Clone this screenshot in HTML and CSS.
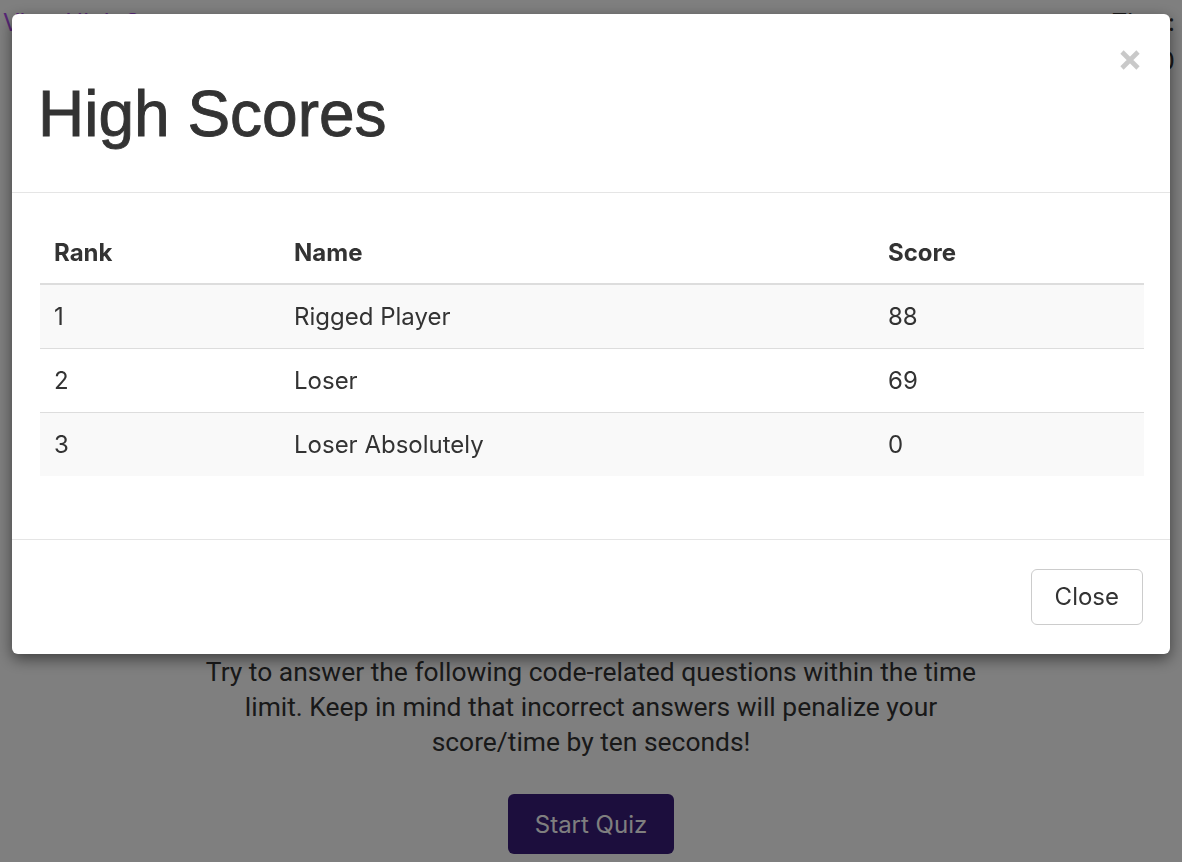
FILE: index.html
```html
<!DOCTYPE html>
<html lang="en">
<head>
<meta charset="utf-8">
<title>Coding Quiz</title>
<link rel="stylesheet" href="styles.css">
</head>
<body>
<header class="topbar">
  <a class="hs-link" href="#">View High Scores</a>
  <div class="timer">
    <div class="timer-label">Time:</div>
    <div class="timer-value">0</div>
  </div>
</header>
<main class="intro">
  <p class="intro-text">Try to answer the following code-related questions within the time limit. Keep in mind that incorrect answers will penalize your score/time by ten seconds!</p>
  <button class="start-btn" type="button">Start Quiz</button>
</main>

<div class="backdrop"></div>
<div class="modal">
  <div class="modal-dialog">
    <div class="modal-header">
      <h1 class="modal-title">High Scores</h1>
      <button class="close-x" type="button" aria-label="Close">
        <svg width="20" height="20" viewBox="0 0 20 20"><path d="M2 2 L18 18 M18 2 L2 18" stroke="#c9c9c9" stroke-width="4.6" fill="none"/></svg>
      </button>
    </div>
    <div class="modal-body">
      <table class="scores">
        <thead>
          <tr><th class="c-rank">Rank</th><th class="c-name">Name</th><th class="c-score">Score</th></tr>
        </thead>
        <tbody>
          <tr><td>1</td><td>Rigged Player</td><td>88</td></tr>
          <tr><td>2</td><td>Loser</td><td>69</td></tr>
          <tr><td>3</td><td>Loser Absolutely</td><td>0</td></tr>
        </tbody>
      </table>
    </div>
    <div class="modal-footer">
      <button class="btn-close" type="button">Close</button>
    </div>
  </div>
</div>
</body>
</html>
```

FILE: styles.css
```css
html, body {
  margin: 0;
  padding: 0;
}

body {
  background: #ffffff;
  color: #333333;
  font-family: Inter, "Liberation Sans", Arial, sans-serif;
  height: 862px;
  overflow: hidden;
}

.topbar {
  display: flex;
  justify-content: space-between;
  align-items: flex-start;
  padding: 5px 7px 0 3px;
}

.hs-link {
  color: #b050ee;
  text-decoration: none;
  font-size: 24px;
  line-height: 36px;
}

.timer {
  text-align: right;
  font-size: 24px;
  line-height: 36px;
  color: #333333;
}

.timer-value {
  font-size: 26px;
  line-height: 40px;
}

.intro {
  display: flex;
  flex-direction: column;
  align-items: center;
  padding-top: 574px;
}

.intro-text {
  width: 790px;
  margin: 0 0 34px;
  text-align: center;
  font-family: Roboto, "Liberation Sans", sans-serif;
  font-size: 26.4px;
  line-height: 35px;
  color: #333333;
}

.start-btn {
  width: 166px;
  height: 60px;
  border: none;
  border-radius: 6px;
  background: #381c7a;
  color: #ffffff;
  font-family: Inter, "Liberation Sans", sans-serif;
  font-size: 24px;
}

.backdrop {
  position: fixed;
  inset: 0;
  background: rgba(0, 0, 0, 0.5);
}

.modal {
  position: fixed;
  inset: 0;
  padding: 14px 12px;
}

.modal-dialog {
  width: 1158px;
  background: #ffffff;
  border-radius: 6px;
  box-shadow: 0 5px 15px rgba(0, 0, 0, 0.5);
}

.modal-header {
  display: flex;
  justify-content: space-between;
  align-items: flex-start;
  padding: 36px 30px 43px 26px;
  border-bottom: 1px solid #e5e5e5;
}

.modal-title {
  margin: 29px 0 0;
  font-family: "Liberation Sans", Arial, sans-serif;
  font-size: 64px;
  line-height: 70px;
  font-weight: 400;
  color: #333333;
  -webkit-text-stroke: 0.9px #333333;
}

.close-x {
  border: none;
  background: none;
  padding: 0;
  width: 20px;
  height: 20px;
  display: block;
}

.close-x svg {
  display: block;
}

.modal-body {
  padding: 28px 26px 28px 28px;
}

.scores {
  width: 100%;
  border-collapse: collapse;
  margin-bottom: 35px;
  font-size: 24px;
  color: #333333;
}

.scores th {
  text-align: left;
  font-weight: 700;
  padding: 13px 12px 12px;
  line-height: 37px;
  border-bottom: 2px solid #dddddd;
}

.scores th:first-child,
.scores td:first-child {
  padding-left: 14px;
}

.c-rank { width: 216px; }
.c-name { width: 570px; }

.scores td {
  padding: 13px 12px;
  line-height: 37px;
  border-top: 1px solid #dddddd;
}

.scores tbody tr:first-child td {
  border-top: none;
}

.scores tbody tr:nth-child(odd) {
  background: #f9f9f9;
}

.modal-footer {
  display: flex;
  justify-content: flex-end;
  padding: 29px 27px 29px;
  border-top: 1px solid #e5e5e5;
}

.btn-close {
  border: 1px solid #cccccc;
  border-radius: 6px;
  background: #ffffff;
  color: #333333;
  font-family: Inter, "Liberation Sans", sans-serif;
  font-size: 24px;
  line-height: 36px;
  padding: 9px 23px;
}
```
